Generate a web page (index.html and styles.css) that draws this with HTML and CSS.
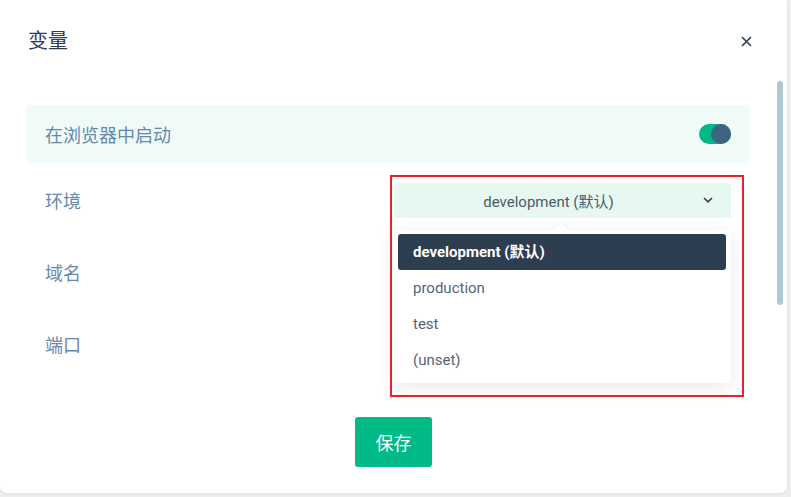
FILE: index.html
```html
<!DOCTYPE html>
<html lang="zh">
<head>
<meta charset="utf-8">
<title>变量</title>
<link rel="stylesheet" href="styles.css">
</head>
<body>
<div class="dialog">
  <div class="header">
    <h1 class="title">变量</h1>
    <button class="close" aria-label="close">
      <svg width="11" height="11" viewBox="0 0 11 11"><path d="M1 1L10 10M10 1L1 10" stroke="#2c3e50" stroke-width="1.6" fill="none"/></svg>
    </button>
  </div>
  <div class="body">
    <div class="row row-toggle">
      <span class="label">在浏览器中启动</span>
      <span class="toggle"><span class="knob"></span></span>
    </div>
    <div class="row">
      <span class="label">环境</span>
      <div class="select-wrap">
        <div class="select">
          <span class="select-text">development (默认)</span>
          <svg class="chev" width="10" height="6" viewBox="0 0 10 6"><path d="M1 1L5 4.8L9 1" stroke="#2c3e50" stroke-width="1.6" fill="none"/></svg>
        </div>
        <div class="menu">
          <span class="menu-arrow"></span>
          <div class="item active">development (默认)</div>
          <div class="item">production</div>
          <div class="item">test</div>
          <div class="item">(unset)</div>
        </div>
        <div class="highlight"></div>
      </div>
    </div>
    <div class="row">
      <span class="label">域名</span>
    </div>
    <div class="row">
      <span class="label">端口</span>
    </div>
    <div class="actions">
      <button class="save">保存</button>
    </div>
  </div>
  <div class="scroll-thumb"></div>
</div>
</body>
</html>
```
FILE: styles.css
```css
* { box-sizing: border-box; }
html, body { margin: 0; padding: 0; }
body {
  background: #ededed;
  font-family: Roboto, "Noto Sans CJK SC", sans-serif;
  width: 791px;
  height: 497px;
  overflow: hidden;
}
.dialog {
  position: relative;
  width: 787px;
  height: 493px;
  background: #fff;
  border-radius: 0 0 7px 7px;
  box-shadow: 0 1px 3px rgba(0,0,0,0.06);
}
.header {
  height: 82px;
  display: flex;
  align-items: center;
  justify-content: space-between;
  padding: 0 35px 0 28px;
}
.title {
  margin: 0;
  font-size: 20px;
  font-weight: 400;
  color: #2c3e50;
  line-height: 1;
}
.close {
  border: 0;
  background: transparent;
  padding: 0;
  width: 11px;
  height: 11px;
  display: flex;
}
.body {
  padding: 23px 38px 0 27px;
}
.row {
  display: flex;
  align-items: center;
  justify-content: space-between;
  height: 72px;
  padding: 0 18px;
}
.row-toggle {
  height: 58px;
  background: #f0fbf7;
  margin-bottom: 1px;
}
.label {
  font-size: 18px;
  color: #6489aa;
}
.toggle {
  width: 32px;
  height: 20px;
  border-radius: 10px;
  background: #00b886;
  display: flex;
  justify-content: flex-end;
}
.knob {
  width: 20px;
  height: 20px;
  border-radius: 50%;
  background: #3e6482;
}
.select-wrap {
  position: relative;
  width: 337px;
}
.select {
  height: 35px;
  background: #e7f8f2;
  border-radius: 3px;
  display: flex;
  align-items: center;
  padding: 0 18px 0 0;
}
.select-text {
  flex: 1;
  text-align: center;
  font-size: 15px;
  color: #4b5c6c;
}
.chev { display: block; }
.menu {
  position: absolute;
  top: 47px;
  left: -2px;
  width: 339px;
  background: #fff;
  border-radius: 3px;
  padding: 4px 5px 5px 6px;
  box-shadow: 0 4px 18px rgba(0,0,0,0.09);
  z-index: 2;
}
.menu-arrow {
  position: absolute;
  top: -5px;
  left: 164px;
  width: 10px;
  height: 10px;
  background: #fff;
  transform: rotate(45deg);
  box-shadow: -2px -2px 4px rgba(0,0,0,0.03);
}
.item {
  position: relative;
  height: 36px;
  line-height: 36px;
  padding-left: 15px;
  font-size: 15px;
  color: #536579;
  border-radius: 3px;
}
.item.active {
  background: #2c3e50;
  color: #fff;
  font-weight: 700;
}
.highlight {
  position: absolute;
  top: -8px;
  left: -4px;
  width: 354px;
  height: 222px;
  border: 2px solid #e6222a;
  z-index: 3;
  pointer-events: none;
}
.actions {
  display: flex;
  justify-content: center;
  padding-top: 37px;
  padding-left: 11px;
}
.save {
  width: 77px;
  height: 50px;
  border: 0;
  border-radius: 3px;
  background: #00ba88;
  color: #fff;
  font-family: Roboto, "Noto Sans CJK SC", sans-serif;
  font-size: 18px;
}
.scroll-thumb {
  position: absolute;
  top: 81px;
  left: 777px;
  width: 6px;
  height: 224px;
  border-radius: 3px;
  background: #adc9d1;
}
```
